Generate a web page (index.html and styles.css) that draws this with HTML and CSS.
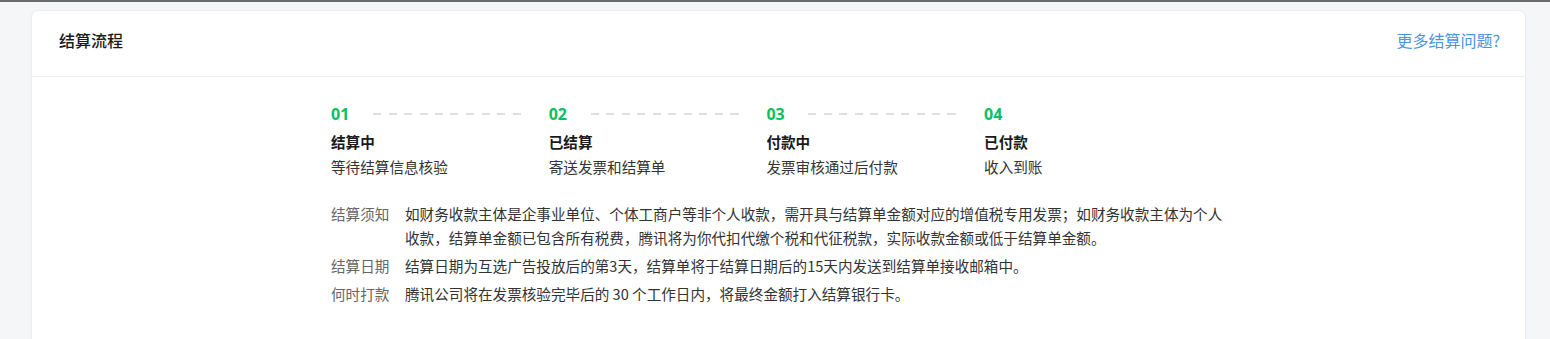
FILE: index.html
```html
<!DOCTYPE html>
<html lang="zh-CN">
<head>
<meta charset="utf-8">
<link rel="stylesheet" href="styles.css">
</head>
<body>
<div class="topbar"></div>
<div class="page">
  <div class="card">
    <div class="card-header">
      <h2 class="card-title">结算流程</h2>
      <a class="more-link" href="#">更多结算问题?</a>
    </div>
    <div class="card-body">
      <div class="content">
        <ol class="steps">
          <li class="step">
            <div class="step-head"><span class="step-num">01</span><span class="step-line"></span></div>
            <div class="step-title">结算中</div>
            <div class="step-desc">等待结算信息核验</div>
          </li>
          <li class="step">
            <div class="step-head"><span class="step-num">02</span><span class="step-line"></span></div>
            <div class="step-title">已结算</div>
            <div class="step-desc">寄送发票和结算单</div>
          </li>
          <li class="step">
            <div class="step-head"><span class="step-num">03</span><span class="step-line"></span></div>
            <div class="step-title">付款中</div>
            <div class="step-desc">发票审核通过后付款</div>
          </li>
          <li class="step">
            <div class="step-head"><span class="step-num">04</span></div>
            <div class="step-title">已付款</div>
            <div class="step-desc">收入到账</div>
          </li>
        </ol>
        <dl class="notes">
          <div class="note">
            <dt class="note-label">结算须知</dt>
            <dd class="note-text">如财务收款主体是企事业单位、个体工商户等非个人收款，需开具与结算单金额对应的增值税专用发票；如财务收款主体为个人收款，结算单金额已包含所有税费，腾讯将为你代扣代缴个税和代征税款，实际收款金额或低于结算单金额。</dd>
          </div>
          <div class="note">
            <dt class="note-label">结算日期</dt>
            <dd class="note-text">结算日期为互选广告投放后的第3天，结算单将于结算日期后的15天内发送到结算单接收邮箱中。</dd>
          </div>
          <div class="note">
            <dt class="note-label">何时打款</dt>
            <dd class="note-text">腾讯公司将在发票核验完毕后的 30 个工作日内，将最终金额打入结算银行卡。</dd>
          </div>
        </dl>
      </div>
    </div>
  </div>
</div>
</body>
</html>
```

FILE: styles.css
```css
* { box-sizing: border-box; }
html, body {
  margin: 0;
  padding: 0;
  background: #f5f6f8;
  font-family: "Noto Sans CJK SC", "Noto Sans", "Liberation Sans", sans-serif;
  color: #333;
  font-size: 14.6px;
}
.topbar {
  height: 2px;
  background: #6b6b6b;
}
.page {
  padding: 8px 24px 0 31px;
}
.card {
  background: #fff;
  border: 1px solid #ebedf0;
  border-radius: 7px;
  box-shadow: 0 0 2px rgba(0, 0, 0, 0.04);
  height: 360px;
}
.card-header {
  height: 66px;
  display: flex;
  align-items: flex-start;
  justify-content: space-between;
  padding: 17px 25px 0 27px;
  border-bottom: 1px solid #eceef1;
}
.card-title {
  margin: 0;
  font-size: 16px;
  line-height: 24px;
  font-weight: 500;
  color: #1a1a1a;
}
.more-link {
  font-size: 16px;
  line-height: 24px;
  color: #4a94e6;
  text-decoration: none;
}
.card-body {
  padding-top: 25px;
}
.content {
  width: 895px;
  margin: 0 auto;
}
.steps {
  list-style: none;
  margin: 0;
  padding: 0;
  display: grid;
  grid-template-columns: repeat(4, 217.7px);
}
.step-head {
  display: flex;
  align-items: center;
  height: 24px;
}
.step-num {
  font-size: 16px;
  font-weight: 700;
  color: #07c160;
  width: 18px;
  font-family: "Noto Sans", "Liberation Sans", sans-serif;
}
.step-line {
  flex: 1;
  height: 2px;
  margin: 0 22px 0 24px;
  background: repeating-linear-gradient(90deg, #e0e0e0 0 8px, transparent 8px 15.5px);
}
.step-title {
  margin-top: 4px;
  font-weight: 700;
  line-height: 24px;
  color: #1a1a1a;
}
.step-desc {
  line-height: 24px;
  margin-top: 1px;
}
.notes {
  margin: 23px 0 0;
  padding: 0;
}
.note {
  display: flex;
  line-height: 24px;
  margin-bottom: 4px;
}
.note-label {
  width: 74px;
  flex: none;
  color: #666;
}
.note-text {
  margin: 0;
  flex: 1;
  color: #333;
}
```
